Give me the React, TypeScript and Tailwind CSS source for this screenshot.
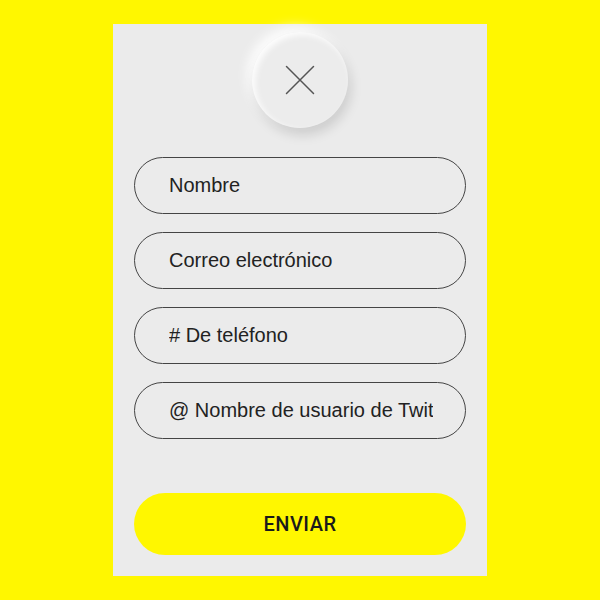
import React from 'react';

const fields = [
  'Nombre',
  'Correo electrónico',
  '# De teléfono',
  '@ Nombre de usuario de Twitter',
];

export default function App() {
  return (
    <div className="w-[600px] h-[600px] bg-[#fff700] flex justify-center pt-6">
      <div className="w-[374px] h-[552px] bg-[#ebebeb] flex flex-col items-center px-[21px]">
        {/* Close button */}
        <button
          className="mt-[8px] w-[96px] h-[96px] rounded-full bg-[#ececec] flex items-center justify-center shadow-[3px_7px_12px_rgba(0,0,0,0.13),-5px_-5px_12px_rgba(255,255,255,0.9),inset_3px_3px_6px_rgba(255,255,255,0.9)]"
        >
          <svg width="30" height="30" viewBox="0 0 30 30" fill="none">
            <path d="M1.5 1.5L28.5 28.5M28.5 1.5L1.5 28.5" stroke="#555" strokeWidth="1.5" strokeLinecap="round" />
          </svg>
        </button>

        {/* Fields */}
        <div className="mt-[29px] w-full flex flex-col gap-[18px]">
          {fields.map((f) => (
            <input
              key={f}
              placeholder={f}
              className="w-full h-[57px] rounded-full border border-[#444] bg-transparent pl-[34px] pr-[32px] text-[20px] text-[#222] placeholder:text-[#222] outline-none font-['Liberation_Sans',Arial,sans-serif]"
            />
          ))}
        </div>

        <button className="mt-[54px] w-full h-[62px] rounded-full bg-[#fff700] text-[20px] font-medium tracking-wide text-[#1a1a1a] font-['Roboto',sans-serif]">
          ENVIAR
        </button>
      </div>
    </div>
  );
}
